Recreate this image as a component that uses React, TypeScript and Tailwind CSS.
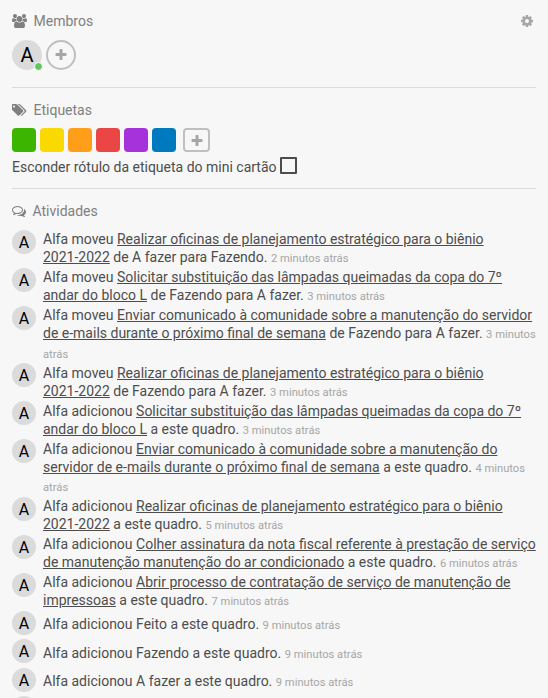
import React from 'react';

const icons = {
  users:
    'M529 896q-162 5-265 128h-134q-82 0-138-40.5t-56-118.5q0-353 124-353 6 0 43.5 21t97.5 42.5 119 21.5q67 0 133-23-5 37-5 66 0 139 81 256zm1071 637q0 120-73 189.5t-194 69.5h-874q-121 0-194-69.5t-73-189.5q0-53 3.5-103.5t14-109 26.5-108.5 43-97.5 62-81 85.5-53.5 111.5-20q10 0 43 21.5t73 48 107 48 135 21.5 135-21.5 107-48 73-48 43-21.5q61 0 111.5 20t85.5 53.5 62 81 43 97.5 26.5 108.5 14 109 3.5 103.5zm-1024-1277q0 106-75 181t-181 75-181-75-75-181 75-181 181-75 181 75 75 181zm704 384q0 159-112.5 271.5t-271.5 112.5-271.5-112.5-112.5-271.5 112.5-271.5 271.5-112.5 271.5 112.5 112.5 271.5zm576 225q0 78-56 118.5t-138 40.5h-134q-103-123-265-128 81-117 81-256 0-29-5-66 66 23 133 23 59 0 119-21.5t97.5-42.5 43.5-21q124 0 124 353zm-128-609q0 106-75 181t-181 75-181-75-75-181 75-181 181-75 181 75 75 181z',
  tags:
    'M384 448q0-53-37.5-90.5t-90.5-37.5-90.5 37.5-37.5 90.5 37.5 90.5 90.5 37.5 90.5-37.5 37.5-90.5zm1067 576q0 53-37 90l-491 492q-39 37-91 37-53 0-90-37l-715-716q-38-37-64.5-101t-26.5-117v-416q0-52 38-90t90-38h416q53 0 117 26.5t102 64.5l715 714q37 39 37 91zm384 0q0 53-37 90l-491 492q-39 37-91 37-36 0-59-14t-53-45l470-470q37-37 37-90 0-52-37-91l-715-714q-38-38-102-64.5t-117-26.5h224q53 0 117 26.5t102 64.5l715 714q37 39 37 91z',
  comments:
    'M704 384q-153 0-286 52t-211.5 141-78.5 191q0 82 53 158t149 132l97 56-35 84q34-20 62-39l44-31 53 10q78 14 153 14 153 0 286-52t211.5-141 78.5-191-78.5-191-211.5-141-286-52zm0-128q191 0 353.5 68.5t256.5 186.5 94 257-94 257-256.5 186.5-353.5 68.5q-86 0-176-16-124 88-278 128-36 9-86 16h-3q-11 0-20.5-8t-11.5-21q-1-3-1-6.5t.5-6.5 2-6l2.5-5 3.5-5.5 4-5 4.5-5 4-4.5q5-6 23-25t26-29.5 22.5-29 25-38.5 20.5-44q-124-72-195-177t-71-224q0-139 94-257t256.5-186.5 353.5-68.5zm822 1169q10 24 20.5 44t25 38.5 22.5 29 26 29.5 23 25q1 1 4 4.5t4.5 5 4 5 3.5 5.5l2.5 5 2 6 .5 6.5-1 6.5q-3 14-13 22t-22 7q-50-7-86-16-154-40-278-128-90 16-176 16-271 0-472-132 58 4 88 4 161 0 309-45t264-129q125-92 192-212t67-254q0-77-23-152 129 71 204 178t75 230q0 120-71 224.5t-195 176.5z',
  cog:
    'M1152 896q0-106-75-181t-181-75-181 75-75 181 75 181 181 75 181-75 75-181zm512-109v222q0 12-8 23t-20 13l-185 28q-19 54-39 91 35 50 107 138 10 12 10 25t-9 23q-27 37-99 108t-94 71q-12 0-26-9l-138-108q-44 23-91 38-16 136-29 186-7 28-36 28h-222q-14 0-24.5-8.5t-11.5-21.5l-28-184q-49-16-90-37l-141 107q-10 9-25 9-14 0-25-11-126-114-165-168-7-10-7-23 0-12 8-23 15-21 51-66.5t54-70.5q-27-50-41-99l-183-27q-13-2-21-12.5t-8-23.5v-222q0-12 8-23t19-13l186-28q14-46 39-92-40-57-107-138-10-12-10-24 0-10 9-23 26-36 98.5-107.5t94.5-71.5q13 0 26 10l138 107q44-23 91-38 16-136 29-186 7-28 36-28h222q14 0 24.5 8.5t11.5 21.5l28 184q49 16 90 37l142-107q9-9 24-9 13 0 25 10 129 119 165 170 7 8 7 22 0 12-8 23-15 21-51 66.5t-54 70.5q26 50 41 98l183 28q13 2 21 12.5t8 23.5z',
  plus:
    'M1600 736v192q0 40-28 68t-68 28h-416v416q0 40-28 68t-68 28h-192q-40 0-68-28t-28-68v-416h-416q-40 0-68-28t-28-68v-192q0-40 28-68t68-28h416v-416q0-40 28-68t68-28h192q40 0 68 28t28 68v416h416q40 0 68 28t28 68z',
};

function Icon({ name, className, viewBox = '0 0 1792 1792' }: { name: keyof typeof icons; className: string; viewBox?: string }) {
  return (
    <svg viewBox={viewBox} className={`shrink-0 fill-current ${className}`} aria-hidden="true">
      <path d={icons[name]} />
    </svg>
  );
}

type Activity = {
  verb: string;
  // Underlined card title, one entry per line
  link?: [string, string];
  rest: string;
  time: string;
  tail?: string;
  row: string;
  pad?: string;
};

const oficinas: [string, string] = ['Realizar oficinas de planejamento estratégico para o biênio', '2021-2022'];
const lampadas: [string, string] = ['Solicitar substituição das lâmpadas queimadas da copa do 7º', 'andar do bloco L'];

const activities: Activity[] = [
  { verb: 'moveu', link: oficinas, rest: 'de A fazer para Fazendo.', time: '2 minutos atrás', row: 'h-[38px]' },
  { verb: 'moveu', link: lampadas, rest: 'de Fazendo para A fazer.', time: '3 minutos atrás', row: 'h-[38px]' },
  { verb: 'moveu', link: ['Enviar comunicado à comunidade sobre a manutenção do servidor', 'de e-mails durante o próximo final de semana'], rest: 'de Fazendo para A fazer.', time: '3 minutos', tail: 'atrás', row: 'h-[57px]' },
  { verb: 'moveu', link: oficinas, rest: 'de Fazendo para A fazer.', time: '3 minutos atrás', row: 'h-[38px]', pad: 'pt-px' },
  { verb: 'adicionou', link: lampadas, rest: 'a este quadro.', time: '3 minutos atrás', row: 'h-[38px]', pad: 'pt-px' },
  { verb: 'adicionou', link: ['Enviar comunicado à comunidade sobre a manutenção do', 'servidor de e-mails durante o próximo final de semana'], rest: 'a este quadro.', time: '4 minutos', tail: 'atrás', row: 'h-[58px]', pad: 'pt-px' },
  { verb: 'adicionou', link: oficinas, rest: 'a este quadro.', time: '5 minutos atrás', row: 'h-[38px]' },
  { verb: 'adicionou', link: ['Colher assinatura da nota fiscal referente à prestação de serviço', 'de manutenção manutenção do ar condicionado'], rest: 'a este quadro.', time: '6 minutos atrás', row: 'h-[38px]' },
  { verb: 'adicionou', link: ['Abrir processo de contratação de serviço de manutenção de', 'impressoas'], rest: 'a este quadro.', time: '7 minutos atrás', row: 'h-[38px]' },
  { verb: 'adicionou', rest: 'Feito a este quadro.', time: '9 minutos atrás', row: 'h-[28px]', pad: 'pt-1' },
  { verb: 'adicionou', rest: 'Fazendo a este quadro.', time: '9 minutos atrás', row: 'h-[29px]', pad: 'pt-[5px]' },
  { verb: 'adicionou', rest: 'A fazer a este quadro.', time: '9 minutos atrás', row: 'h-[28px]', pad: 'pt-1' },
];

const labelColors = ['bg-[#3cb500]', 'bg-[#fad900]', 'bg-[#ff9f19]', 'bg-[#eb4646]', 'bg-[#a632db]', 'bg-[#0079bf]'];

function Avatar({ initial }: { initial?: string }) {
  return (
    <div className="flex size-6 shrink-0 justify-center rounded-full bg-[#dbdbdb] pt-[3px] text-base leading-5 text-black">{initial}</div>
  );
}

function ActivityRow({ verb, link, rest, time, tail, row, pad = '' }: Activity) {
  const when = <span className="text-[11.2px] text-[#a6a6a6]">{time}</span>;
  return (
    <div className={`flex shrink-0 gap-[7px] ${row}`}>
      <Avatar initial="A" />
      <div className={`leading-[18px] whitespace-nowrap ${pad}`}>
        {link ? (
          <>
            <div className="h-[18px]">Alfa {verb} <a className="underline">{link[0]}</a></div>
            <div className="h-[18px]"><a className="underline">{link[1]}</a> {rest} {when}</div>
            {tail && <div className={`text-[11.2px] text-[#a6a6a6] ${pad ? 'pt-[3px]' : 'pt-1'}`}>{tail}</div>}
          </>
        ) : (
          <div>Alfa {verb} {rest} {when}</div>
        )}
      </div>
    </div>
  );
}

export default function App() {
  return (
    <div className="flex h-[698px] w-[548px] flex-col overflow-hidden bg-[#f7f7f7] px-3 font-[Roboto,sans-serif] text-sm text-[#4d4d4d]">
      <section className="h-[87px] shrink-0">
        <div className="flex h-[40px] items-center pt-[2px] text-[#808080]">
          <Icon name="users" viewBox="-64 0 1920 1792" className="h-[14px] w-[15px]" />
          <h3 className="ml-[6.5px] leading-[18px]">Membros</h3>
          <Icon name="cog" className="mr-[2px] ml-auto size-[14px] text-[#a6a6a6]" />
        </div>
        <div className="flex gap-1">
          <div className="relative flex size-[30px] justify-center rounded-full bg-[#dbdbdb] pt-[3px] text-xl leading-6 text-black">
            A
            <span className="absolute top-[22px] left-[22px] size-[9px] rounded-full border border-white bg-[#64c464]" />
          </div>
          <div className="flex size-[30px] items-center justify-center rounded-full border-2 border-[#bfbfbf] text-[#a6a6a6]">
            <Icon name="plus" className="size-[14px]" />
          </div>
        </div>
      </section>

      <section className="h-[101px] shrink-0 border-t border-[#dbdbdb]">
        <div className="flex h-[40px] items-center pt-[4px] text-[#808080]">
          <Icon name="tags" viewBox="0 0 1920 1792" className="h-[14px] w-[15px]" />
          <h3 className="ml-[6.5px] leading-[18px]">Etiquetas</h3>
        </div>
        <div className="flex gap-1">
          {labelColors.map((color) => (
            <span key={color} className={`size-6 rounded ${color}`} />
          ))}
          <span className="ml-[3px] flex h-6 w-[27px] items-center justify-center rounded border-2 border-[#bfbfbf] pt-px text-[#a6a6a6]">
            <Icon name="plus" className="size-[14px]" />
          </span>
        </div>
        <div className="flex pt-[5px]">
          <span className="pt-[1px] leading-[18px]">Esconder rótulo da etiqueta do mini cartão</span>
          <span className="ml-[3px] size-[17px] rounded-[1px] border-2 border-[#4d4d4d]" />
        </div>
      </section>

      <section className="flex shrink-0 flex-col border-t border-[#dbdbdb]">
        <div className="flex h-[41px] items-center pt-[2px] text-[#808080]">
          <Icon name="comments" className="size-[14px]" />
          <h3 className="ml-[6.5px] leading-[18px]">Atividades</h3>
        </div>
        {activities.map((activity, index) => (
          <ActivityRow key={index} {...activity} />
        ))}
        <Avatar />
      </section>
    </div>
  );
}
